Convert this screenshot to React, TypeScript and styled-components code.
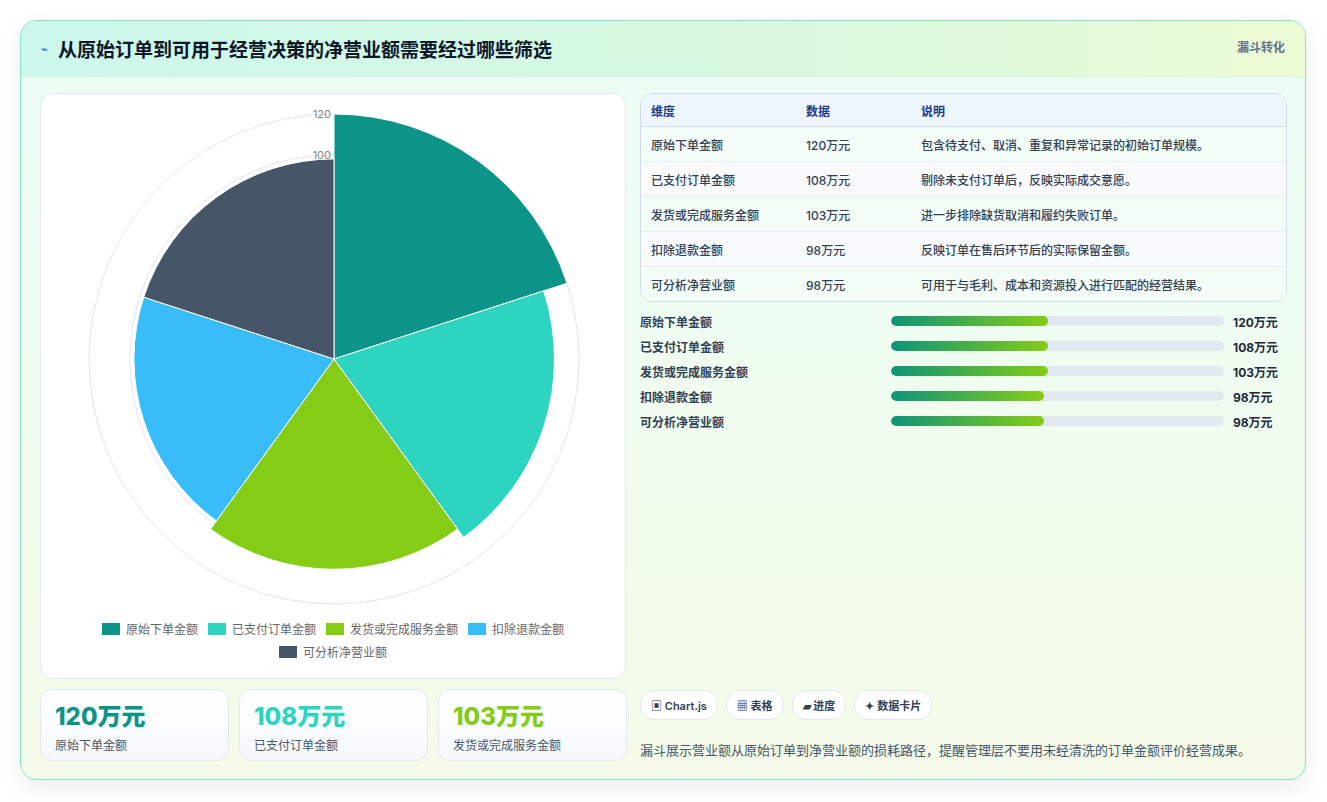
import React from "react";
import styled, { createGlobalStyle } from "styled-components";

const items = [
  { name: "原始下单金额", v: 120, color: "#0d9488", note: "包含待支付、取消、重复和异常记录的初始订单规模。" },
  { name: "已支付订单金额", v: 108, color: "#2dd4bf", note: "剔除未支付订单后，反映实际成交意愿。" },
  { name: "发货或完成服务金额", v: 103, color: "#84cc16", note: "进一步排除缺货取消和履约失败订单。" },
  { name: "扣除退款金额", v: 98, color: "#38bdf8", note: "反映订单在售后环节后的实际保留金额。" },
  { name: "可分析净营业额", v: 98, color: "#475569", note: "可用于与毛利、成本和资源投入进行匹配的经营结果。" },
];

const Global = createGlobalStyle`
  body { margin: 0; background: #fff; font-family: Inter, "Noto Sans CJK SC", sans-serif; color: #1e293b; }
`;

const Page = styled.div`
  padding: 20px 21px 22px 20px;
`;
const Card = styled.div`
  height: 758px;
  border: 1px solid #86e3c4;
  border-radius: 16px;
  background: linear-gradient(180deg, #ecfdf7 0%, #f4fbe8 100%);
  box-shadow: 0 8px 24px rgba(0, 0, 0, 0.08);
  overflow: hidden;
  display: flex;
  flex-direction: column;
`;
const Header = styled.div`
  height: 55px;
  flex: none;
  display: flex;
  align-items: center;
  justify-content: space-between;
  padding: 0 20px;
  background: linear-gradient(90deg, #ccf7ec 0%, #d9f9df 60%, #ecfbd4 100%);
  border-bottom: 1px solid #d7eee6;
`;
const Title = styled.h1`
  margin: 0;
  font-size: 19px;
  font-weight: 700;
  color: #0f172a;
  display: flex;
  align-items: center;
  gap: 10px;
  span { font-size: 11px; color: #3b82f6; }
`;
const Tag = styled.div`
  font-size: 12px;
  font-weight: 600;
  color: #64748b;
  align-self: flex-start;
  margin-top: 17px;
`;
const Body = styled.div`
  flex: 1;
  display: grid;
  grid-template-columns: 586px 1fr;
  gap: 14px;
  padding: 16px 18px 18px 19px;
`;
const Col = styled.div`
  display: flex;
  flex-direction: column;
  gap: 10px;
`;
const ChartPanel = styled.div`
  height: 584px;
  background: #fff;
  border: 1px solid #e2e8f0;
  border-radius: 14px;
  display: flex;
  flex-direction: column;
  align-items: center;
`;
const Legend = styled.div`
  display: flex;
  flex-wrap: wrap;
  justify-content: center;
  gap: 6px 10px;
  width: 500px;
  margin-top: 6px;
`;
const LegendItem = styled.div`
  display: flex;
  align-items: center;
  gap: 6px;
  font-size: 12px;
  color: #666;
`;
const Swatch = styled.i<{ $c: string }>`
  width: 18px;
  height: 12px;
  background: ${(p) => p.$c};
`;
const Stats = styled.div`
  display: grid;
  grid-template-columns: repeat(3, 189px);
  gap: 10px;
`;
const Stat = styled.div`
  height: 72px;
  background: linear-gradient(180deg, #ffffff, #f5f9fc);
  border: 1px solid #e2e8f0;
  border-radius: 12px;
  padding: 12px 14px;
  box-sizing: border-box;
`;
const StatNum = styled.div<{ $c: string }>`
  font-size: 24px;
  font-weight: 800;
  color: ${(p) => p.$c};
  line-height: 30px;
`;
const StatLabel = styled.div`
  font-size: 12px;
  color: #475569;
  margin-top: 4px;
`;
const Table = styled.table`
  width: 100%;
  border-collapse: separate;
  border-spacing: 0;
  background: #fff;
  border: 1px solid #cfdbe6;
  border-radius: 12px;
  overflow: hidden;
  font-size: 12px;
  th {
    text-align: left;
    background: #eef6fd;
    color: #1e3a8a;
    font-weight: 600;
    height: 32px;
    padding: 0 10px;
    border-bottom: 1px solid #cfdbe6;
  }
  td {
    height: 34px;
    padding: 0 10px;
    color: #334155;
    font-weight: 500;
    border-bottom: 1px solid #e5edf3;
  }
  tr:nth-child(odd) td { background: #f3fcf6; }
  tr:nth-child(even) td { background: #f8fafc; }
  tr:last-child td { border-bottom: 0; }
`;
const Bars = styled.div`
  display: flex;
  flex-direction: column;
  gap: 7px;
  margin-top: 0px;
`;
const BarRow = styled.div`
  display: grid;
  grid-template-columns: 242px 333px 1fr;
  gap: 9px;
  align-items: center;
  font-size: 12px;
  font-weight: 600;
  color: #334155;
  height: 18px;
`;
const Track = styled.div`
  height: 10px;
  border-radius: 5px;
  background: #e2e8f0;
  overflow: hidden;
`;
const Fill = styled.div`
  height: 100%;
  border-radius: 5px;
  background: linear-gradient(90deg, #0f9478, #84cc16);
`;
const Value = styled.span`
  font-weight: 700;
  color: #1e293b;
`;
const Spacer = styled.div`
  flex: 1;
`;
const Chips = styled.div`
  display: flex;
  gap: 8px;
`;
const Chip = styled.div`
  height: 28px;
  padding: 0 10px;
  border-radius: 14px;
  border: 1px solid #e2e8f0;
  background: #fff;
  font-size: 11px;
  font-weight: 600;
  color: #334155;
  display: flex;
  align-items: center;
  gap: 3px;
`;
const Note = styled.p`
  margin: 10px 0 2px;
  font-size: 13px;
  color: #475569;
`;

const CX = 293;
const CY = 265;
const rOf = (v: number) => (245 * v) / 120;

function wedge(i: number, r: number) {
  const a0 = (-90 + i * 72) * (Math.PI / 180);
  const a1 = (-90 + (i + 1) * 72) * (Math.PI / 180);
  const x0 = CX + r * Math.cos(a0);
  const y0 = CY + r * Math.sin(a0);
  const x1 = CX + r * Math.cos(a1);
  const y1 = CY + r * Math.sin(a1);
  return `M${CX},${CY} L${x0},${y0} A${r},${r} 0 0 1 ${x1},${y1} Z`;
}

const PolarChart = () => (
  <svg width="584" height="520" viewBox="0 0 584 520">
    <circle cx={CX} cy={CY} r={rOf(120)} fill="none" stroke="#e5e5e5" />
    <circle cx={CX} cy={CY} r={rOf(100)} fill="none" stroke="#e5e5e5" />
    {items.map((it, i) => (
      <path key={it.name} d={wedge(i, rOf(it.v))} fill={it.color} stroke="#fff" strokeWidth="1" />
    ))}
    <text x={CX - 3} y={CY - rOf(120) + 4} textAnchor="end" fontSize="11" fill="#888">120</text>
    <text x={CX - 3} y={CY - rOf(100) + 4} textAnchor="end" fontSize="11" fill="#888">100</text>
  </svg>
);

export default function App() {
  return (
    <Page>
      <Global />
      <Card>
        <Header>
          <Title>
            <span>⌁</span>从原始订单到可用于经营决策的净营业额需要经过哪些筛选
          </Title>
          <Tag>漏斗转化</Tag>
        </Header>
        <Body>
          <Col>
            <ChartPanel>
              <PolarChart />
              <Legend>
                {items.map((it) => (
                  <LegendItem key={it.name}>
                    <Swatch $c={it.color} />
                    {it.name}
                  </LegendItem>
                ))}
              </Legend>
            </ChartPanel>
            <Stats>
              {items.slice(0, 3).map((it) => (
                <Stat key={it.name}>
                  <StatNum $c={it.color}>{it.v}万元</StatNum>
                  <StatLabel>{it.name}</StatLabel>
                </Stat>
              ))}
            </Stats>
          </Col>
          <Col>
            <Table>
              <thead>
                <tr>
                  <th style={{ width: 135 }}>维度</th>
                  <th style={{ width: 95 }}>数据</th>
                  <th>说明</th>
                </tr>
              </thead>
              <tbody>
                {items.map((it) => (
                  <tr key={it.name}>
                    <td>{it.name}</td>
                    <td>{it.v}万元</td>
                    <td>{it.note}</td>
                  </tr>
                ))}
              </tbody>
            </Table>
            <Bars>
              {items.map((it) => (
                <BarRow key={it.name}>
                  <span>{it.name}</span>
                  <Track>
                    <Fill style={{ width: `${it.v >= 103 ? 47 : 46}%` }} />
                  </Track>
                  <Value>{it.v}万元</Value>
                </BarRow>
              ))}
            </Bars>
            <Spacer />
            <Chips>
              <Chip>▣ Chart.js</Chip>
              <Chip>▦ 表格</Chip>
              <Chip>▰ 进度</Chip>
              <Chip>✦ 数据卡片</Chip>
            </Chips>
            <Note>漏斗展示营业额从原始订单到净营业额的损耗路径，提醒管理层不要用未经清洗的订单金额评价经营成果。</Note>
          </Col>
        </Body>
      </Card>
    </Page>
  );
}
